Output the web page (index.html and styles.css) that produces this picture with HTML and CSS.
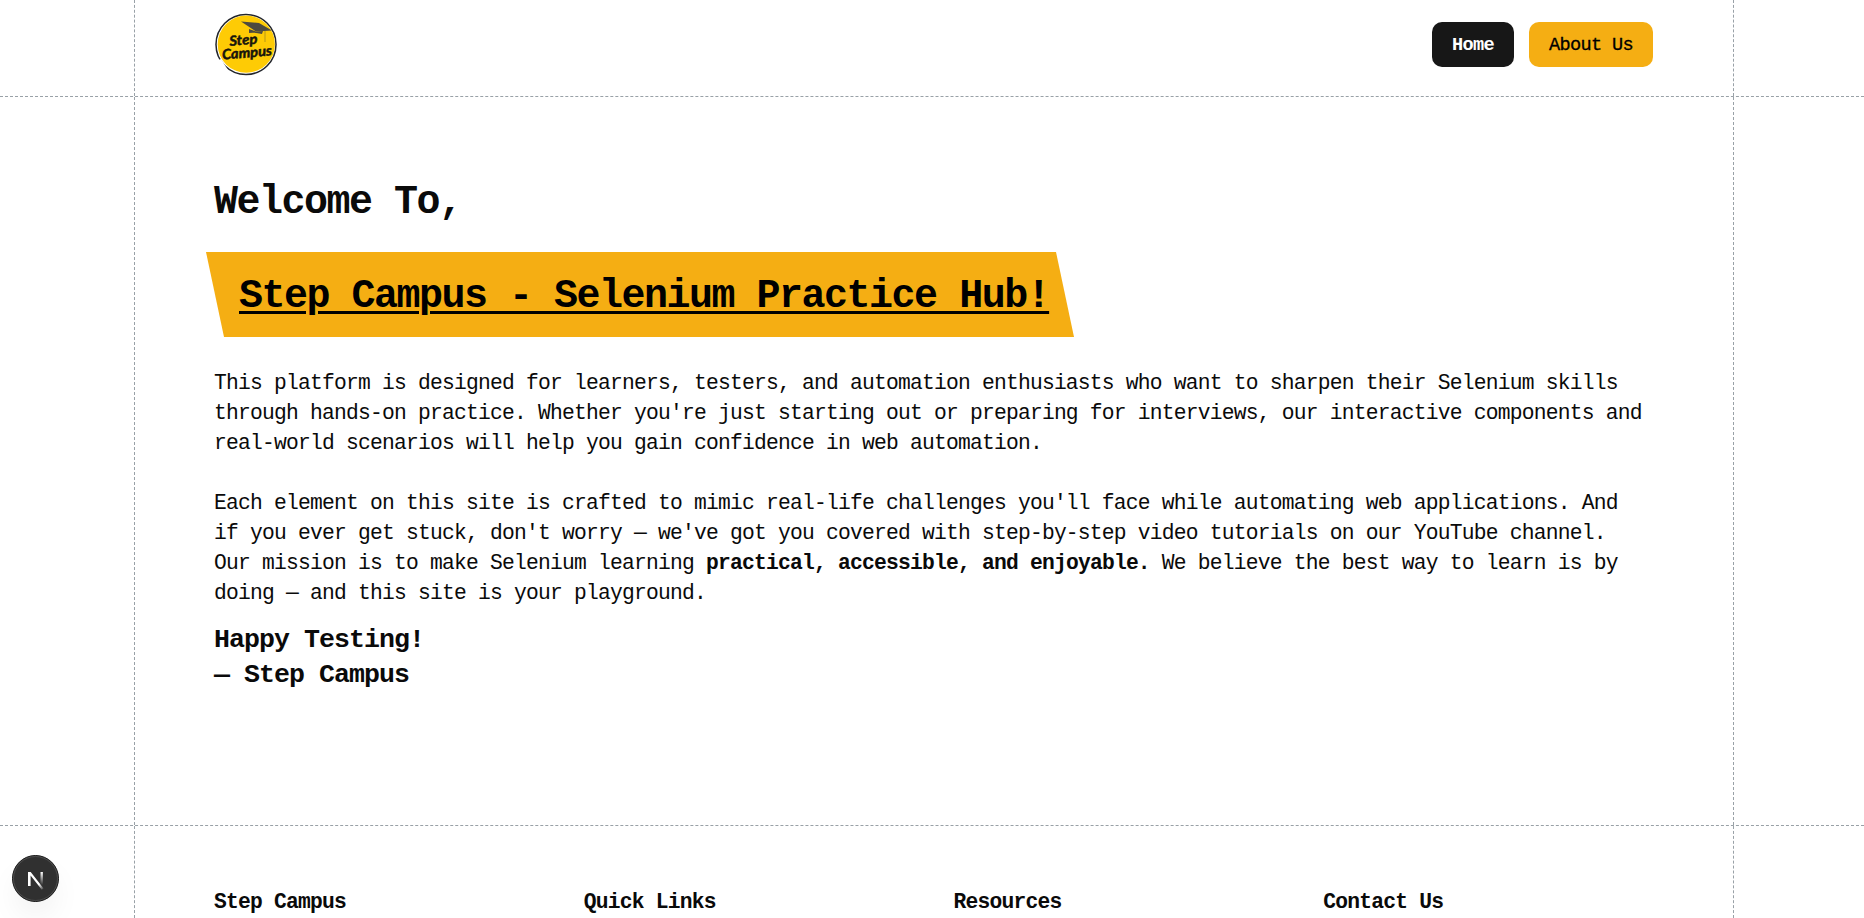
FILE: index.html
```html
<!DOCTYPE html>
<html lang="en">
<head>
<meta charset="utf-8">
<title>Step Campus</title>
<link rel="stylesheet" href="styles.css">
</head>
<body>
<header class="band band-header">
  <div class="frame header-row">
    <svg class="logo" viewBox="0 0 62 64" role="img" aria-label="Step Campus">
      <circle cx="31" cy="31.500" r="30" fill="#fff" stroke="#22252b" stroke-width="1.5"/>
      <circle cx="31.3" cy="31.2" r="28.6" fill="#fecb05"/>
      <path d="M1 48L6 46L13 57L9 61Z" fill="#fff"/>
      <path d="M26 8.500L44 10L57 17.500L41 18.500Z" fill="#4d4a40"/>
      <path d="M34 16L41 18.500L48 18L47 21Q39 19 34 20Z" fill="#4d4a40"/>
      <path d="M50 18V29" stroke="#a48a22" stroke-width=".8"/>
      <g class="logo-text" transform="rotate(-5 31 35)">
        <text x="15" y="31.500" textLength="28" lengthAdjust="spacingAndGlyphs">Step</text>
        <text x="6.500" y="44.500" textLength="50" lengthAdjust="spacingAndGlyphs">Campus</text>
      </g>
    </svg>
    <nav class="nav">
      <a class="nav-link nav-home">Home</a>
      <a class="nav-link nav-about">About Us</a>
    </nav>
  </div>
</header>
<main class="band band-main">
  <div class="frame main-body">
    <h1 class="title">Welcome To,</h1>
    <div class="banner"><span class="banner-text">Step Campus - Selenium Practice Hub!</span></div>
    <p class="copy">This platform is designed for learners, testers, and automation enthusiasts who want to sharpen their Selenium skills<br>through hands-on practice. Whether you're just starting out or preparing for interviews, our interactive components and<br>real-world scenarios will help you gain confidence in web automation.</p>
    <p class="copy">Each element on this site is crafted to mimic real-life challenges you'll face while automating web applications. And<br>if you ever get stuck, don't worry — we've got you covered with step-by-step video tutorials on our YouTube channel.<br>Our mission is to make Selenium learning <b>practical, accessible, and enjoyable.</b> We believe the best way to learn is by<br>doing — and this site is your playground.</p>
    <p class="signoff">Happy Testing!<br>— Step Campus</p>
  </div>
</main>
<footer class="band band-footer">
  <div class="frame footer-grid">
    <h2 class="footer-title">Step Campus</h2>
    <h2 class="footer-title">Quick Links</h2>
    <h2 class="footer-title">Resources</h2>
    <h2 class="footer-title">Contact Us</h2>
  </div>
</footer>
<div class="dev-badge">
  <svg width="47" height="47" viewBox="0 0 47 47">
    <defs>
      <linearGradient id="fade-leg" x1="0" y1="0" x2="1" y2="1"><stop offset=".7" stop-color="#fff"/><stop offset="1" stop-color="#fff" stop-opacity="0"/></linearGradient>
      <linearGradient id="fade-bar" x1="0" y1="0" x2="0" y2="1"><stop offset="0" stop-color="#fff"/><stop offset="1" stop-color="#fff" stop-opacity="0"/></linearGradient>
    </defs>
    <circle cx="23.500" cy="23.500" r="23" fill="#303030" stroke="#151515"/>
    <circle cx="23.500" cy="23.500" r="22" fill="none" stroke="#4c4c4c"/>
    <path d="M16 31V17H18.700L31.600 33.400L29.800 34.800L18.600 20.600V31Z" fill="url(#fade-leg)"/>
    <path d="M28.500 17H30.900V30H28.500Z" fill="url(#fade-bar)"/>
  </svg>
</div>
</body>
</html>
```
FILE: styles.css
```css
* { box-sizing: border-box; }
body {
  margin: 0;
  height: 918px;
  overflow: hidden;
  background: #fff;
  color: #0a0a0a;
  font-family: "Liberation Mono", "DejaVu Sans Mono", monospace;
}
h1, h2, p { margin: 0; }
.band { width: 100%; }
.band-header { height: 97px; border-bottom: 1px dashed #99a1a7; }
.band-main { height: 729px; border-bottom: 1px dashed #99a1a7; }
.band-footer { height: 92px; }
.frame {
  width: 1600px;
  height: 100%;
  margin-left: 134px;
  padding: 0 80px 0 79px;
  border-left: 1px dashed #99a1a7;
  border-right: 1px dashed #99a1a7;
}
.header-row { display: flex; justify-content: space-between; align-items: flex-start; }
.logo { width: 62px; height: 64px; margin: 13px 0 0 1px; }
.logo-text text { font: italic bold 14px Lato, sans-serif; fill: #17150c; stroke: #17150c; stroke-width: .5px; }
.nav { display: flex; gap: 15px; margin-top: 22px; }
.nav-link {
  height: 45px;
  padding: 0 20px;
  border-radius: 10px;
  font-size: 18.600px;
  letter-spacing: -.66px;
  line-height: 48px;
}
.nav-home { background: #171717; color: #fff; font-weight: 700; }
.nav-about { background: #f5ae13; color: #000; -webkit-text-stroke: .3px #000; }
.main-body { display: flex; flex-direction: column; align-items: flex-start; padding-top: 81px; }
.title { font-size: 40px; letter-spacing: -1.500px; line-height: 50px; font-weight: 700; }
.banner {
  width: 868px;
  height: 85px;
  margin: 24px 0 0 -8px;
  padding: 18px 0 0 33px;
  background: #f5ae13;
  clip-path: polygon(0 0, 850px 0, 100% 100%, 18px 100%);
  color: #000;
  font-size: 40px;
  letter-spacing: -1.500px;
  line-height: 54px;
  font-weight: 700;
  white-space: nowrap;
}
.banner-text { text-decoration: underline; text-decoration-thickness: 3px; text-underline-offset: 4px; }
.copy { margin-top: 30px; font-size: 21.300px; letter-spacing: -.782px; line-height: 30px; white-space: nowrap; }
.banner + .copy { margin-top: 31px; }
.signoff { margin-top: 15px; font-size: 26.600px; letter-spacing: -.963px; line-height: 35px; font-weight: 700; }
.footer-grid { display: grid; grid-template-columns: repeat(4, 1fr); column-gap: 40px; padding-top: 61px; }
.footer-title { font-size: 21.300px; letter-spacing: -.782px; line-height: 30px; font-weight: 700; }
.dev-badge {
  position: fixed;
  left: 12px;
  top: 855px;
  width: 47px;
  height: 47px;
  border-radius: 50%;
  box-shadow: 0 16px 32px -8px rgba(0, 0, 0, .1);
}
.dev-badge svg { display: block; }
```
